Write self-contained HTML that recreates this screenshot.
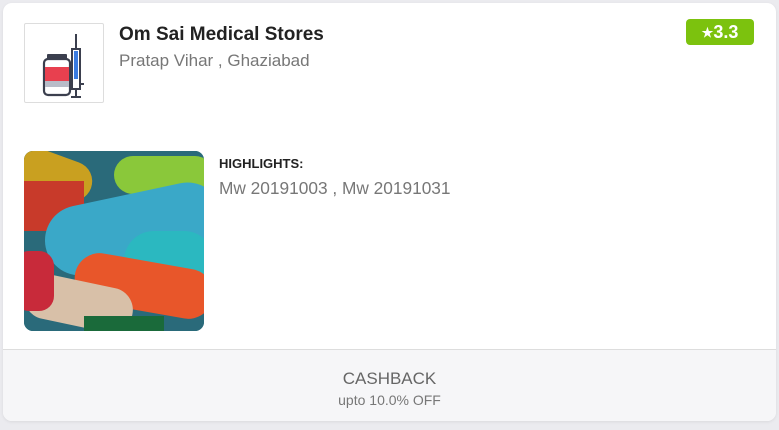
<!DOCTYPE html>
<html><head><style>
body{margin:0;width:779px;height:430px;background:#ebebef;font-family:"Liberation Sans",sans-serif;position:relative;overflow:hidden}
.card{position:absolute;left:3px;top:3px;width:773px;height:418px;background:#fff;border-radius:9px;overflow:hidden;box-shadow:0 1px 3px rgba(0,0,0,.08)}
.logo{position:absolute;left:21px;top:20px;width:78px;height:78px;border:1px solid #ddd;border-radius:2px}
.t{position:absolute;left:116px;top:21px;font-size:19px;font-weight:bold;color:#222}
.s{position:absolute;left:116px;top:48px;font-size:17px;color:#777}
.r{position:absolute;left:683px;top:16px;width:68px;height:26px;background:#7cc20e;border-radius:4px;color:#fff;font-weight:bold;font-size:18px;text-align:center;line-height:26px}
.r small{font-size:13px;vertical-align:1px}
.img{position:absolute;left:21px;top:148px;width:180px;height:180px;border-radius:9px;overflow:hidden;background:#1f6f82}
.h{position:absolute;left:216px;top:153px;font-size:13px;font-weight:bold;color:#222}
.hv{position:absolute;left:216px;top:175px;font-size:17.3px;color:#777}
.f{position:absolute;left:0;top:346px;width:773px;height:72px;background:#f6f6f8;border-top:1px solid #ddd;text-align:center}
.f1{margin-top:19px;font-size:17px;color:#666}
.f2{margin-top:3px;font-size:14px;color:#777}
</style></head><body>
<div class="card">
<div class="logo"><svg width="78" height="78" viewBox="0 0 78 78">
<rect x="22" y="30" width="20" height="5" rx="1" fill="#3b3f4e"/>
<rect x="19" y="35" width="26" height="36" rx="4" fill="#fff" stroke="#3b3f4e" stroke-width="2.2"/>
<rect x="20" y="43" width="24" height="14" fill="#e8404f"/>
<rect x="20" y="57" width="24" height="6" fill="#b8bcc8"/>
<line x1="51" y1="10" x2="51" y2="25" stroke="#3b3f4e" stroke-width="2"/>
<rect x="47" y="25" width="8" height="40" fill="#fff" stroke="#3b3f4e" stroke-width="2"/>
<rect x="49" y="27" width="4" height="28" fill="#3a7be0"/>
<line x1="51" y1="65" x2="51" y2="73" stroke="#3b3f4e" stroke-width="2"/>
<line x1="46" y1="73" x2="56" y2="73" stroke="#3b3f4e" stroke-width="2"/>
<line x1="55" y1="60" x2="59" y2="60" stroke="#3b3f4e" stroke-width="2"/>
</svg></div>
<div class="t">Om Sai Medical Stores</div>
<div class="s">Pratap Vihar , Ghaziabad</div>
<div class="r"><small>★</small>3.3</div>
<div class="img"><svg width="180" height="180">
<rect width="180" height="180" fill="#2a6a7a"/>
<rect x="-20" y="0" width="90" height="40" rx="20" fill="#c9a020" transform="rotate(20 20 20)"/>
<rect x="90" y="5" width="100" height="38" rx="19" fill="#8ac83a"/>
<rect x="0" y="30" width="60" height="50" fill="#c83a2a"/>
<rect x="20" y="45" width="180" height="70" rx="35" fill="#3aa8c8" transform="rotate(-12 100 80)"/>
<rect x="100" y="80" width="90" height="60" rx="30" fill="#2bb8c0"/>
<rect x="50" y="110" width="140" height="50" rx="25" fill="#e8562a" transform="rotate(10 120 135)"/>
<rect x="0" y="130" width="110" height="45" rx="22" fill="#d8c0a8" transform="rotate(12 55 150)"/>
<rect x="-10" y="100" width="40" height="60" rx="15" fill="#c82a3a"/>
<rect x="60" y="165" width="80" height="20" fill="#1a6a3a"/>
</svg></div>
<div class="h">HIGHLIGHTS:</div>
<div class="hv">Mw 20191003 , Mw 20191031</div>
<div class="f"><div class="f1">CASHBACK</div><div class="f2">upto 10.0% OFF</div></div>
</div>
</body></html>
